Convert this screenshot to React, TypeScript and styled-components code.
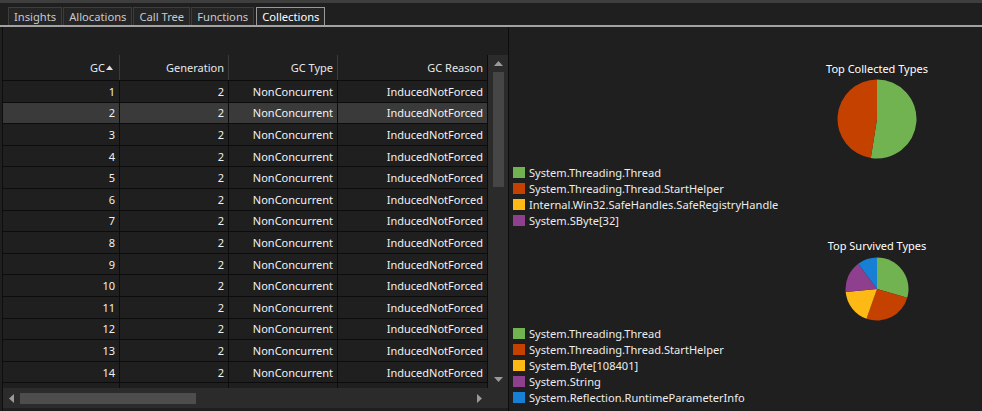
import React from "react";
import styled, { createGlobalStyle } from "styled-components";

const FONT = `"Noto Sans", "Segoe UI", "Liberation Sans", sans-serif`;

const GlobalStyle = createGlobalStyle`
  html, body { margin: 0; padding: 0; background: #1f1f1f; }
  body { font-family: ${FONT}; font-size: 11px; color: #f0f0f0; }
  * { box-sizing: border-box; }
`;

const Root = styled.div`
  width: 982px;
  height: 411px;
  display: flex;
  flex-direction: column;
  background: #1f1f1f;
  overflow: hidden;
`;

const TopStrip = styled.div`
  height: 3px;
  flex: none;
  background: #3e3e3e;
`;

const TabBar = styled.div`
  flex: none;
  height: 24px;
  display: flex;
  align-items: flex-end;
  padding: 4px 0 0 8px;
  border-bottom: 2px solid #a2a2a2;
`;

const Tab = styled.div<{ $active?: boolean }>`
  height: 18px;
  display: flex;
  align-items: center;
  padding: 0 5px;
  margin-right: ${(p) => (p.$active ? "0" : "1px")};
  margin-left: ${(p) => (p.$active ? "1px" : "0")};
  background: #252526;
  border: 1px solid ${(p) => (p.$active ? "#9a9a9a" : "#3d3d3d")};
  border-bottom: none;
  color: ${(p) => (p.$active ? "#ffffff" : "#c6ccd2")};
  font-size: 11.2px;
  line-height: 1;
`;

const Content = styled.div`
  flex: 1;
  display: flex;
  min-height: 0;
`;

const GridPane = styled.div`
  width: 506px;
  margin-left: 2px;
  border-left: 1px solid #0e0e0e;
  display: flex;
  flex-direction: column;
  flex: none;
`;

const TopGap = styled.div`
  height: 28px;
  flex: none;
`;

const GridBody = styled.div`
  height: 333px;
  display: flex;
  flex: none;
  overflow: hidden;
`;

const Table = styled.div`
  width: 485px;
  display: flex;
  flex-direction: column;
  overflow: hidden;
  border-right: 1px solid #0c0c0c;
`;

const COLS = "117px 109px 109px 150px";

const HeaderRow = styled.div`
  display: grid;
  grid-template-columns: ${COLS};
  height: 26px;
  flex: none;
  border-bottom: 1px solid #0c0c0c;
`;

const HeaderCell = styled.div`
  display: flex;
  align-items: center;
  justify-content: flex-end;
  padding-right: 4px;
  border-right: 1px solid #3a3a3a;
  color: #e8e8e8;
  white-space: nowrap;
`;

const SortArrow = styled.svg`
  margin-left: 1px;
  margin-right: 2px;
`;

const Row = styled.div<{ $selected?: boolean }>`
  display: grid;
  grid-template-columns: ${COLS};
  height: 21.6px;
  flex: none;
  background: ${(p) => (p.$selected ? "#3a3a3a" : "#1f1f1f")};
  border-bottom: 1px solid #0c0c0c;
`;

const Cell = styled.div`
  display: flex;
  align-items: center;
  justify-content: flex-end;
  padding-right: 4px;
  border-right: 1px solid #0c0c0c;
  color: #f2f2f2;
  white-space: nowrap;
`;

const VScroll = styled.div`
  width: 20px;
  background: #2b2b2b;
  display: flex;
  flex-direction: column;
  align-items: center;
`;

const ArrowBox = styled.div<{ $h: number; $w?: number }>`
  height: ${(p) => p.$h}px;
  width: ${(p) => (p.$w ? `${p.$w}px` : "auto")};
  display: flex;
  align-items: center;
  justify-content: center;
  flex: none;
`;

const VThumb = styled.div`
  width: 11px;
  height: 115px;
  background: #464646;
  flex: none;
`;

const Fill = styled.div`
  flex: 1;
`;

const HScroll = styled.div`
  height: 20px;
  flex: none;
  background: #2b2b2b;
  display: flex;
  align-items: center;
`;

const HThumb = styled.div`
  width: 176px;
  height: 11px;
  background: #4d4d4d;
  flex: none;
`;

const Divider = styled.div`
  width: 1px;
  flex: none;
  background: #0c0c0c;
`;

const RightPane = styled.div`
  flex: 1;
  display: flex;
  flex-direction: column;
  padding: 35px 0 0 4px;
`;

const ChartHead = styled.div<{ $gap: number }>`
  align-self: flex-end;
  width: 200px;
  margin-right: 5px;
  margin-top: ${(p) => p.$gap}px;
  display: flex;
  flex-direction: column;
  align-items: center;
`;

const ChartTitle = styled.div`
  height: 14px;
  line-height: 14px;
  color: #ffffff;
  font-size: 11px;
  white-space: nowrap;
`;

const PieSvg = styled.svg<{ $gap: number }>`
  display: block;
  margin-top: ${(p) => p.$gap}px;
`;

const Legend = styled.div<{ $gap: number }>`
  display: flex;
  flex-direction: column;
  margin-top: ${(p) => p.$gap}px;
`;

const LegendItem = styled.div`
  height: 16px;
  display: flex;
  align-items: center;
  color: #ececec;
  font-size: 11.1px;
  white-space: nowrap;
`;

const Swatch = styled.span<{ $c: string }>`
  width: 12px;
  height: 11px;
  background: ${(p) => p.$c};
  margin-right: 4px;
  flex: none;
`;

const C = {
  green: "#70b350",
  orange: "#c54100",
  yellow: "#ffb914",
  purple: "#8e3f8e",
  blue: "#1780d4",
};

function slicePath(cx: number, cy: number, r: number, a0: number, a1: number) {
  const rad = (d: number) => ((d - 90) * Math.PI) / 180;
  const x0 = cx + r * Math.cos(rad(a0));
  const y0 = cy + r * Math.sin(rad(a0));
  const x1 = cx + r * Math.cos(rad(a1));
  const y1 = cy + r * Math.sin(rad(a1));
  const large = a1 - a0 > 180 ? 1 : 0;
  return `M${cx},${cy} L${x0.toFixed(2)},${y0.toFixed(2)} A${r},${r} 0 ${large} 1 ${x1.toFixed(2)},${y1.toFixed(2)} Z`;
}

function Pie({ size, r, slices, gap }: { size: number; r: number; slices: { c: string; a0: number; a1: number }[]; gap: number }) {
  const c = size / 2;
  return (
    <PieSvg $gap={gap} width={size} height={size} viewBox={`0 0 ${size} ${size}`}>
      {slices.map((s, i) => (
        <path key={i} d={slicePath(c, c, r, s.a0, s.a1)} fill={s.c} />
      ))}
    </PieSvg>
  );
}

const rows = Array.from({ length: 15 }, (_, i) => i + 1);

const legend1 = [
  { c: C.green, t: "System.Threading.Thread" },
  { c: C.orange, t: "System.Threading.Thread.StartHelper" },
  { c: C.yellow, t: "Internal.Win32.SafeHandles.SafeRegistryHandle" },
  { c: C.purple, t: "System.SByte[32]" },
];

const legend2 = [
  { c: C.green, t: "System.Threading.Thread" },
  { c: C.orange, t: "System.Threading.Thread.StartHelper" },
  { c: C.yellow, t: "System.Byte[108401]" },
  { c: C.purple, t: "System.String" },
  { c: C.blue, t: "System.Reflection.RuntimeParameterInfo" },
];

export default function App() {
  return (
    <Root>
      <GlobalStyle />
      <TopStrip />
      <TabBar>
        <Tab>Insights</Tab>
        <Tab>Allocations</Tab>
        <Tab>Call Tree</Tab>
        <Tab>Functions</Tab>
        <Tab $active>Collections</Tab>
      </TabBar>
      <Content>
        <GridPane>
          <TopGap />
          <GridBody>
            <Table>
              <HeaderRow>
                <HeaderCell>
                  GC
                  <SortArrow width="7" height="5" viewBox="0 0 7 5">
                    <path d="M0,5 L3.5,0.5 L7,5 Z" fill="#e0e0e0" />
                  </SortArrow>
                </HeaderCell>
                <HeaderCell>Generation</HeaderCell>
                <HeaderCell>GC Type</HeaderCell>
                <HeaderCell>GC Reason</HeaderCell>
              </HeaderRow>
              {rows.map((n) => (
                <Row key={n} $selected={n === 2}>
                  <Cell>{n}</Cell>
                  <Cell>2</Cell>
                  <Cell>NonConcurrent</Cell>
                  <Cell>InducedNotForced</Cell>
                </Row>
              ))}
            </Table>
            <VScroll>
              <ArrowBox $h={17}>
                <svg width="9" height="5" viewBox="0 0 9 5">
                  <path d="M0,5 L4.5,0 L9,5 Z" fill="#9a9a9a" />
                </svg>
              </ArrowBox>
              <VThumb />
              <Fill />
              <ArrowBox $h={17}>
                <svg width="9" height="5" viewBox="0 0 9 5">
                  <path d="M0,0 L4.5,5 L9,0 Z" fill="#9a9a9a" />
                </svg>
              </ArrowBox>
            </VScroll>
          </GridBody>
          <HScroll>
            <ArrowBox $h={20} $w={17}>
              <svg width="5" height="9" viewBox="0 0 5 9">
                <path d="M5,0 L0,4.5 L5,9 Z" fill="#9a9a9a" />
              </svg>
            </ArrowBox>
            <HThumb />
            <Fill />
            <ArrowBox $h={20} $w={12}>
              <svg width="5" height="9" viewBox="0 0 5 9">
                <path d="M0,0 L5,4.5 L0,9 Z" fill="#9a9a9a" />
              </svg>
            </ArrowBox>
            <ArrowBox $h={20} $w={23} />
          </HScroll>
        </GridPane>
        <Divider />
        <RightPane>
          <ChartHead $gap={0}>
            <ChartTitle>Top Collected Types</ChartTitle>
            <Pie
              gap={3}
              size={80}
              r={39.5}
              slices={[
                { c: C.green, a0: 0, a1: 189 },
                { c: C.orange, a0: 189, a1: 360 },
              ]}
            />
          </ChartHead>
          <Legend $gap={5}>
            {legend1.map((l) => (
              <LegendItem key={l.t}>
                <Swatch $c={l.c} />
                {l.t}
              </LegendItem>
            ))}
          </Legend>
          <ChartHead $gap={11}>
            <ChartTitle>Top Survived Types</ChartTitle>
            <Pie
              gap={4}
              size={64}
              r={31.5}
              slices={[
                { c: C.green, a0: 0, a1: 106 },
                { c: C.orange, a0: 106, a1: 199.5 },
                { c: C.yellow, a0: 199.5, a1: 264.5 },
                { c: C.purple, a0: 264.5, a1: 323.5 },
                { c: C.blue, a0: 323.5, a1: 360 },
              ]}
            />
          </ChartHead>
          <Legend $gap={4}>
            {legend2.map((l) => (
              <LegendItem key={l.t}>
                <Swatch $c={l.c} />
                {l.t}
              </LegendItem>
            ))}
          </Legend>
        </RightPane>
      </Content>
    </Root>
  );
}
